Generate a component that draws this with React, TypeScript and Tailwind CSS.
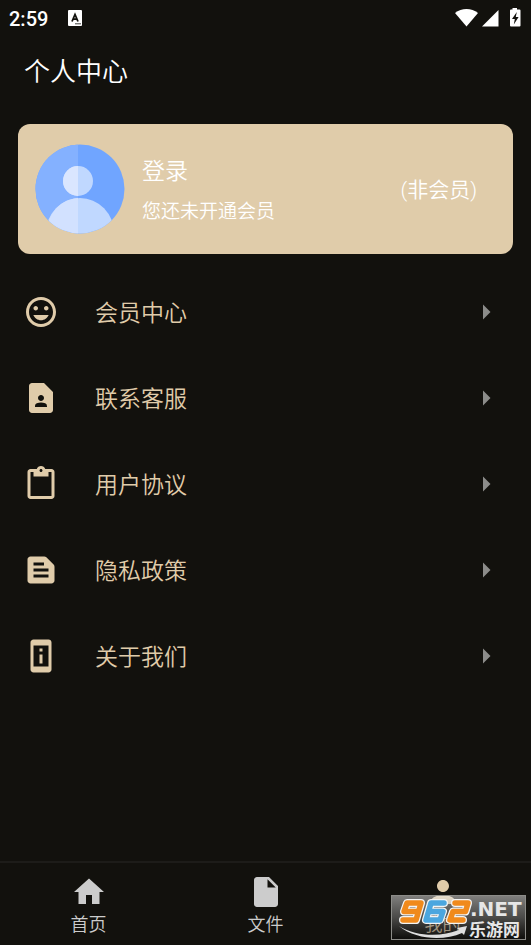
import type { IconType } from "react-icons";
import {
  MdArrowRight,
  MdContactPage,
  MdContentPaste,
  MdHome,
  MdInsertDriveFile,
  MdMood,
  MdPermDeviceInformation,
  MdPerson,
  MdTextSnippet,
} from "react-icons/md";

const menuItems: { label: string; icon: IconType }[] = [
  { label: "会员中心", icon: MdMood },
  { label: "联系客服", icon: MdContactPage },
  { label: "用户协议", icon: MdContentPaste },
  { label: "隐私政策", icon: MdTextSnippet },
  { label: "关于我们", icon: MdPermDeviceInformation },
];

const tabs: { label: string; icon: IconType; active?: boolean }[] = [
  { label: "首页", icon: MdHome },
  { label: "文件", icon: MdInsertDriveFile },
  { label: "我的", icon: MdPerson, active: true },
];

function StatusBar() {
  return (
    <div className="flex h-9 items-center justify-between pr-2 pl-[9px] text-white">
      <div className="flex items-center gap-5">
        <span className="pt-0.5 text-xl font-medium">2:59</span>
        <svg width="14" height="16" viewBox="0 0 14 16" aria-hidden="true">
          <rect width="14" height="16" rx="1" fill="#fff" />
          <path d="M4 11.500 L7 4.500 L10 11.500 M5 9.200 H9" fill="none" stroke="#12110d" strokeWidth="1.800" />
          <path d="M7 13.800 H13" stroke="#12110d" strokeWidth="0.800" />
        </svg>
      </div>
      <svg width="68" height="20" viewBox="0 0 68 20" fill="#fff" aria-hidden="true">
        <path d="M0 5 C6.500 -0.500 16.500 -0.500 23 5 L11.500 18.500 Z" />
        <path d="M43.500 2 V18.500 H27 Z" />
        <path d="M57.500 1.500 V0 H62 V1.500 H64.500 Q65.500 1.500 65.500 2.500 V17.500 Q65.500 18.500 64.500 18.500 H56 Q55 18.500 55 17.500 V2.500 Q55 1.500 56 1.500 Z" />
        <path d="M61.800 4 L57 11 H59.800 L58.800 16.500 L63.600 9 H60.800 Z" fill="#12110d" />
      </svg>
    </div>
  );
}

function Avatar() {
  return (
    <svg className="size-[90px] shrink-0" viewBox="0 0 90 90" role="img" aria-label="头像">
      <defs>
        <clipPath id="avatar-round">
          <circle cx="45" cy="45" r="44.500" />
        </clipPath>
      </defs>
      <g clipPath="url(#avatar-round)">
        <rect width="90" height="90" fill="#70a5ff" />
        <rect width="43" height="90" fill="#84b1ff" />
        <circle cx="43" cy="37" r="15" fill="#c0d8ff" />
        <path d="M43 22 A15 15 0 0 0 43 52 Z" fill="#dae6ff" />
        <ellipse cx="45" cy="89" rx="34" ry="35" fill="#c0d8ff" />
        <path d="M43 54 C27 55 13 67 11 90 H43 Z" fill="#d2e1ff" />
      </g>
    </svg>
  );
}

function Watermark() {
  return (
    <svg
      className="pointer-events-none absolute right-[5px] bottom-[5px]"
      width="135"
      height="45"
      viewBox="0 0 135 45"
      aria-hidden="true"
    >
      <defs>
        <linearGradient id="mark-bg" x1="0" y1="0" x2="0" y2="1">
          <stop offset="0" stopColor="#f0f0f0" stopOpacity="0.5" />
          <stop offset="0.500" stopColor="#909090" stopOpacity="0.450" />
          <stop offset="1" stopColor="#080808" stopOpacity="0.400" />
        </linearGradient>
      </defs>
      <rect x="0.500" y="0.500" width="134" height="44" fill="url(#mark-bg)" stroke="#8c8c88" />
      <path d="M8 31 C26 42 50 42 68 35 L66 33 L76 31 L73 40 L71 38 C53 46 25 45 8 31 Z" fill="#dedede" />
      <g fill="none" strokeLinecap="round" strokeLinejoin="round">
        <g stroke="#f4f4f4" strokeWidth="8">
          <path d="M27 16.500 H13 L16 8 H30 L25 25 H12" />
          <path d="M53 8 H40 L35 25 H49 L52 16.500 H38" />
          <path d="M64 8 H77 L74.500 16.500 H62 L59 25 H72" />
        </g>
        <g strokeWidth="5.500">
          <path d="M27 16.500 H13 L16 8 H30 L25 25 H12" stroke="#f08a1c" />
          <path d="M53 8 H40 L35 25 H49 L52 16.500 H38" stroke="#4ba6df" />
          <path d="M64 8 H77 L74.500 16.500 H62 L59 25 H72" stroke="#f08a1c" />
        </g>
      </g>
      <text x="79" y="21" fontSize="20" fontWeight="700" fill="#e6e6e6" fontFamily="DejaVu Sans, sans-serif">
        .NET
      </text>
      <text x="78" y="41" fontSize="17" fontWeight="700" fill="#e6e6e6" fontFamily="Noto Sans CJK SC, sans-serif">
        乐游网
      </text>
    </svg>
  );
}

export default function App() {
  return (
    <div className="relative flex min-h-screen flex-col bg-[#12110d] font-[Roboto,'Noto_Sans_CJK_SC',sans-serif]">
      <StatusBar />

      <header className="flex h-[70px] items-center px-6">
        <h1 className="pt-0.5 text-[26px] font-[350] text-white">个人中心</h1>
      </header>

      <main className="flex-1">
        <section className="mx-[18px] mt-[18px] flex h-[130px] items-center rounded-xl bg-[#e0ccaa] pr-9 pl-[17px] font-[350] text-white">
          <Avatar />
          <div className="ml-[17px] flex flex-1 flex-col items-start gap-3 pt-1.5">
            <button type="button" className="text-[23px] leading-7">
              登录
            </button>
            <p className="text-[19px] leading-7">您还未开通会员</p>
          </div>
          <span className="pt-1 text-[21px]">(非会员)</span>
        </section>

        <nav className="mt-[15px]">
          {menuItems.map(({ label, icon: Icon }) => (
            <button
              key={label}
              type="button"
              className="flex h-[86px] w-full items-center pr-[27px] pl-[23px] text-left text-[#e0ccaa]"
            >
              <Icon size={36} />
              <span className="ml-9 flex-1 pt-1 text-[23px] font-[350]">{label}</span>
              <MdArrowRight size={36} className="text-[#8c8c8a]" />
            </button>
          ))}
        </nav>
      </main>

      <footer className="grid h-[84px] grid-cols-3 border-t-2 border-[#1d1c19]">
        {tabs.map(({ label, icon: Icon, active }) => (
          <button
            key={label}
            type="button"
            className={`flex flex-col items-center pt-[11px] ${active ? "text-[#e0ccaa]" : "text-[#cccccc]"}`}
          >
            <Icon size={36} />
            <span className="text-lg leading-[30px] font-[350]">{label}</span>
          </button>
        ))}
      </footer>

      <Watermark />
    </div>
  );
}
